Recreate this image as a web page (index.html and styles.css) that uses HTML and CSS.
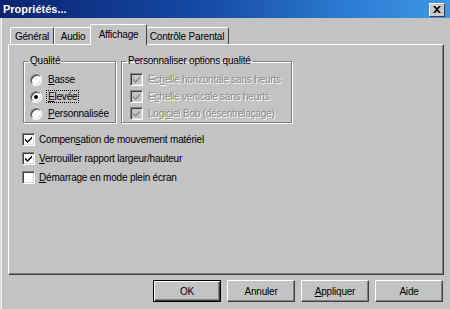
FILE: index.html
```html
<!DOCTYPE html>
<html lang="fr">
<head>
    <meta charset="UTF-8">
    <title>Propriétés...</title>
    <link rel="stylesheet" href="styles.css">
</head>
<body>
    <div class="window">
        <div class="titlebar">
            <span class="title">Propriétés...</span>
            <span class="close-btn">
                <svg width="8" height="7" viewBox="0 0 8 7"><path d="M0 0h2l2 2 2-2h2L5 3.5 8 7H6L4 5 2 7H0l3-3.5z" fill="#000"/></svg>
            </span>
        </div>
        <div class="content">
            <div class="tabs">
                <div class="tab tab-general">Général</div>
                <div class="tab tab-audio">Audio</div>
                <div class="tab tab-active">Affichage</div>
                <div class="tab tab-parental">Contrôle Parental</div>
            </div>
            <div class="panel">
                <div class="groups">
                    <fieldset class="group group-quality">
                        <legend>Qualité</legend>
                        <div class="row"><span class="radio"></span><span><u>B</u>asse</span></div>
                        <div class="row"><span class="radio checked"></span><span class="focus"><u>E</u>levée</span></div>
                        <div class="row"><span class="radio"></span><span><u>P</u>ersonnalisée</span></div>
                    </fieldset>
                    <fieldset class="group group-custom">
                        <legend>Personnaliser options qualité</legend>
                        <div class="row disabled"><span class="check"><svg width="9" height="9" viewBox="0 0 9 9"><path d="M1 3.5l2.5 2.5 4.5-4.5v2l-4.5 4.5L1 5.5z" /></svg></span><span>Ec<u>h</u>elle horizontale sans heurts</span></div>
                        <div class="row disabled"><span class="check"><svg width="9" height="9" viewBox="0 0 9 9"><path d="M1 3.5l2.5 2.5 4.5-4.5v2l-4.5 4.5L1 5.5z" /></svg></span><span>E<u>c</u>helle verticale sans heurts</span></div>
                        <div class="row disabled"><span class="check"><svg width="9" height="9" viewBox="0 0 9 9"><path d="M1 3.5l2.5 2.5 4.5-4.5v2l-4.5 4.5L1 5.5z" /></svg></span><span>Logi<u>c</u>iel Bob (désentrelaçage)</span></div>
                    </fieldset>
                </div>
                <div class="options">
                    <div class="row"><span class="check"><svg width="9" height="9" viewBox="0 0 9 9"><path d="M1 3.5l2.5 2.5 4.5-4.5v2l-4.5 4.5L1 5.5z" /></svg></span><span>Compen<u>s</u>ation de mouvement matériel</span></div>
                    <div class="row"><span class="check"><svg width="9" height="9" viewBox="0 0 9 9"><path d="M1 3.5l2.5 2.5 4.5-4.5v2l-4.5 4.5L1 5.5z" /></svg></span><span><u>V</u>errouiller rapport largeur/hauteur</span></div>
                    <div class="row"><span class="check"></span><span><u>D</u>émarrage en mode plein écran</span></div>
                </div>
            </div>
            <div class="buttons">
                <button class="btn btn-default">OK</button>
                <button class="btn">Annuler</button>
                <button class="btn"><u>A</u>ppliquer</button>
                <button class="btn">Aide</button>
            </div>
        </div>
    </div>
</body>
</html>
```
FILE: styles.css
```css
body {
    margin: 0;
    padding: 0;
    font-family: "Liberation Sans", Arial, sans-serif;
    font-size: 10px;
    letter-spacing: -0.2px;
    color: #000;
    background: #c3c3c3;
}

.window {
    width: 450px;
    height: 309px;
    box-sizing: border-box;
    background: #c3c3c3;
    box-shadow: inset 1px 0 0 #dcdcdc, inset 2px 0 0 #f4f4f4;
    overflow: hidden;
}

.titlebar {
    height: 18px;
    display: flex;
    align-items: center;
    justify-content: space-between;
    padding: 0 5px 0 3px;
    background: linear-gradient(to right, #0a2370 0%, #154aa6 45%, #2f7fd6 80%, #3e96e6 100%);
}

.title {
    color: #fff;
    font-weight: bold;
    font-size: 11px;
    letter-spacing: 0;
}

.close-btn {
    width: 14px;
    height: 12px;
    display: flex;
    align-items: center;
    justify-content: center;
    background: #c8c8c8;
    border: 1px solid;
    border-color: #fff #404040 #404040 #fff;
    margin-top: 1px;
}

.content {
    padding: 0 6px 0 8px;
}

.tabs {
    display: flex;
    align-items: flex-end;
    height: 26px;
    padding-left: 2px;
}

.tab {
    height: 17px;
    line-height: 18px;
    box-sizing: border-box;
    text-align: center;
    border-top: 1px solid #fff;
    border-left: 1px solid #fff;
    border-right: 1px solid #404040;
    border-radius: 2px 2px 0 0;
    background: #c3c3c3;
}

.tab-general { width: 44px; }
.tab-audio { width: 38px; }
.tab-parental { width: 84px; }

.tab-active {
    position: relative;
    z-index: 1;
    width: 57px;
    height: 21px;
    line-height: 20px;
    margin: 0 -2px -1px -2px;
}

.panel {
    height: 231px;
    box-sizing: border-box;
    border-top: 1px solid #fff;
    border-left: 1px solid #fff;
    border-right: 1px solid #404040;
    border-bottom: 1px solid #404040;
    box-shadow: inset -1px -1px 0 #808080;
    padding: 10px 14px 0 14px;
}

.groups {
    display: flex;
    gap: 5px;
}

.group {
    margin: 0;
    padding: 4px 0 0 4px;
    border: 1px solid #808080;
    box-shadow: 1px 1px 0 #fff, inset 1px 1px 0 #fff;
    box-sizing: border-box;
    height: 68px;
}

.group legend {
    padding: 0 2px;
    margin-left: 0;
    line-height: 12px;
}

.group-quality { width: 93px; }
.group-custom { width: 171px; }

.group-quality .row { margin-left: 2px; }
.group-custom .row { margin-left: 4px; gap: 5px; }

.row {
    display: flex;
    align-items: center;
    gap: 6px;
    height: 17px;
    white-space: nowrap;
}

.radio {
    width: 12px;
    height: 12px;
    box-sizing: border-box;
    border-radius: 50%;
    background: #fff;
    border: 1px solid;
    border-color: #808080 #fff #fff #808080;
    box-shadow: inset 1px 1px 0 #404040, inset -1px -1px 0 #dcdcdc;
    display: flex;
    align-items: center;
    justify-content: center;
}

.radio.checked::after {
    content: "";
    width: 4px;
    height: 4px;
    border-radius: 50%;
    background: #000;
}

.focus {
    outline: 1px dotted #000;
    outline-offset: 0;
    padding: 0 1px;
    margin-left: -1px;
}

.check {
    width: 13px;
    height: 13px;
    flex: none;
    box-sizing: border-box;
    background: #fff;
    border: 1px solid;
    border-color: #808080 #fff #fff #808080;
    box-shadow: inset 1px 1px 0 #404040, inset -1px -1px 0 #dcdcdc;
    display: flex;
    align-items: center;
    justify-content: center;
}

.check svg path {
    fill: #000;
}

.disabled {
    color: #8a8a8a;
    text-shadow: 1px 1px 0 #fff;
}

.disabled .check {
    background: #c3c3c3;
}

.disabled .check svg path {
    fill: #8a8a8a;
}

.options {
    margin: 7px 0 0 -1px;
}

.options .row {
    height: 19px;
    gap: 4px;
}

.buttons {
    display: flex;
    justify-content: flex-end;
    gap: 6px;
    margin-top: 5px;
    padding-right: 1px;
}

.btn {
    width: 68px;
    height: 22px;
    font-family: "Liberation Sans", Arial, sans-serif;
    font-size: 10px;
    letter-spacing: -0.2px;
    color: #000;
    background: #c3c3c3;
    border: 1px solid;
    border-color: #fff #404040 #404040 #fff;
    box-shadow: inset -1px -1px 0 #808080;
    padding: 0;
}

.btn-default {
    border: 1px solid #000;
    box-shadow: inset 1px 1px 0 #fff, inset -1px -1px 0 #404040, inset -2px -2px 0 #808080;
}
```
